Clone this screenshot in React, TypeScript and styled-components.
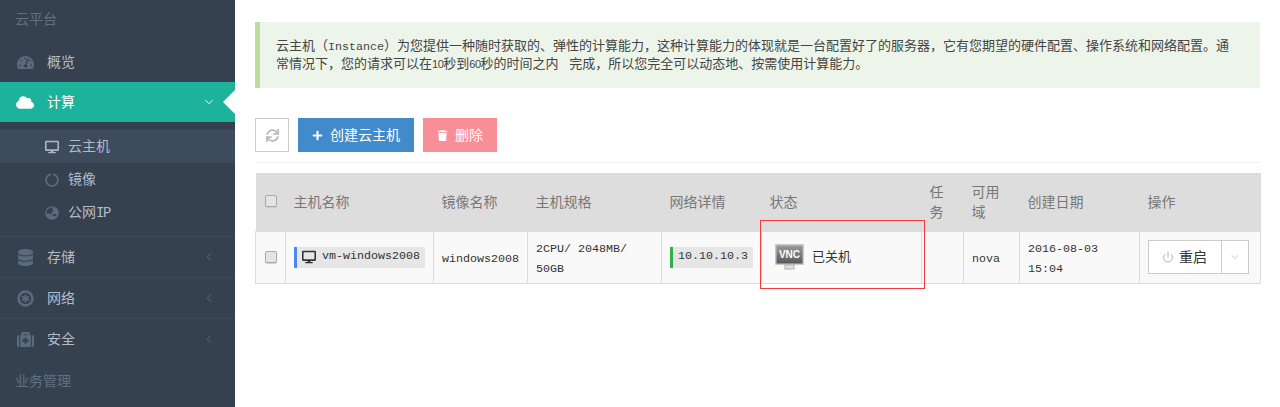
import React from "react";
import styled, { createGlobalStyle } from "styled-components";
import { ChevronDown, ChevronLeft, Power } from "lucide-react";
import {
  FaCircleNotch,
  FaCloud,
  FaDatabase,
  FaDesktop,
  FaGlobeAsia,
  FaMedkit,
  FaPlus,
  FaSync,
  FaTachometerAlt,
  FaTrash,
} from "react-icons/fa";

const GlobalStyle = createGlobalStyle`
  html, body {
    margin: 0;
    height: 407px;
    overflow: hidden;
    background: #fff;
    font-family: "Noto Sans CJK SC", "Liberation Sans", sans-serif;
    font-size: 14px;
    color: #333;
  }
`;

const Page = styled.div`
  display: flex;
  height: 407px;
`;

const Sidebar = styled.aside`
  width: 235px;
  flex-shrink: 0;
  background: #364150;
  overflow: hidden;
`;

const Heading = styled.div<{ $height: number; $lift: number }>`
  display: flex;
  align-items: center;
  box-sizing: border-box;
  height: ${({ $height }) => $height}px;
  padding: 0 0 ${({ $lift }) => $lift}px 15px;
  color: #617082;
  font-size: 14px;
`;

const NavItem = styled.div<{ $active?: boolean; $divider?: boolean }>`
  position: relative;
  display: flex;
  align-items: center;
  height: 40px;
  padding: 0 19px 0 16px;
  background: ${({ $active }) => ($active ? "#1cb29b" : "transparent")};
  color: ${({ $active }) => ($active ? "#fff" : "#b4bcc8")};
  border-top: ${({ $divider }) => ($divider ? "1px solid #3d4957" : "none")};

  ${({ $active }) =>
    $active &&
    `&::after {
      content: "";
      position: absolute;
      right: 0;
      top: 8px;
      border: 12px solid transparent;
      border-left-width: 0;
      border-right-color: #fff;
    }`}
`;

const NavIcon = styled.span<{ $active?: boolean; $size?: number }>`
  display: flex;
  justify-content: center;
  width: 18px;
  margin-right: 13px;
  font-size: ${({ $size }) => $size ?? 17}px;
  color: ${({ $active }) => ($active ? "#fff" : "#5b6a7d")};
`;

const NavLabel = styled.span`
  flex: 1;
  padding-bottom: 2px;
`;

const NavArrow = styled.span<{ $active?: boolean }>`
  display: flex;
  color: ${({ $active }) => ($active ? "#fff" : "#5b6a7d")};
`;

const SubMenu = styled.div`
  padding: 8px 0 7px;
`;

const SubItem = styled.div<{ $active?: boolean }>`
  display: flex;
  align-items: center;
  height: 33px;
  padding-left: 44px;
  background: ${({ $active }) => ($active ? "#3e4b5c" : "transparent")};
  color: #b4bcc8;
`;

const SubIcon = styled.span<{ $active?: boolean }>`
  display: flex;
  justify-content: center;
  width: 15px;
  margin-right: 9px;
  font-size: 14px;
  color: ${({ $active }) => ($active ? "#aeb6c2" : "#5b6a7d")};
`;

const SubLabel = styled.span`
  padding-bottom: 3px;
`;

const Main = styled.main`
  position: relative;
  flex: 1;
  padding: 22px 20px 0;
  min-width: 0;
`;

const Alert = styled.div`
  height: 66px;
  box-sizing: border-box;
  padding: 14px 20px 0 16px;
  background: #edf5ea;
  border-left: 5px solid #bcdca2;
  color: #444;
  font-size: 13px;
  line-height: 18px;
`;

const Latin = styled.span`
  font-family: "Liberation Mono", monospace;
  font-size: 11.67px;
  line-height: 1;
`;

const IpText = styled.span`
  font-family: "Liberation Mono", monospace;
  font-size: 14px;
  letter-spacing: -1.4px;
  line-height: 1;
`;

const Digits = styled.span`
  font-family: "Liberation Sans", sans-serif;
  font-size: 11px;
  letter-spacing: -0.5px;
  line-height: 1;
`;

const WideSpace = styled.span`
  font-family: "Liberation Mono", monospace;
  font-size: 18px;
  line-height: 1;
`;

const Toolbar = styled.div`
  display: flex;
  gap: 9px;
  margin-top: 30px;
  padding-bottom: 10px;
  border-bottom: 1px solid #eee;
`;

const ToolButton = styled.div<{ $bg: string }>`
  display: flex;
  align-items: center;
  gap: 7px;
  height: 34px;
  padding: 0 14px;
  background: ${({ $bg }) => $bg};
  color: #fff;
  font-size: 14px;
`;

const ToolLabel = styled.span`
  padding-bottom: 2px;
`;

const RefreshButton = styled.div`
  display: flex;
  align-items: center;
  justify-content: center;
  box-sizing: border-box;
  width: 34px;
  height: 34px;
  border: 1px solid #ccc;
  color: #bbb;
  font-size: 13px;
`;

const Table = styled.table`
  width: 1005px;
  margin-top: 10px;
  table-layout: fixed;
  border-collapse: collapse;
`;

const HeadRow = styled.tr`
  height: 58px;
  background: #ddd;
`;

const HeadCell = styled.th`
  padding: 0 8px 2px;
  text-align: left;
  font-weight: normal;
  font-size: 14px;
  line-height: 20px;
  color: #777;
`;

const BodyRow = styled.tr`
  height: 52px;
  background: #f9f9f9;
`;

const BodyCell = styled.td`
  padding: 0 8px;
  border: 1px solid #ddd;
  font-size: 13px;
  line-height: 20px;
  color: #333;
`;

const Check = styled.span`
  display: block;
  box-sizing: border-box;
  width: 12px;
  height: 12px;
  margin: 0 0 0 1px;
  border: 1px solid #aaa;
  border-radius: 2px;
  background: #e4e4e4;
  box-shadow: 0 1px 1px #ccc;
`;

const Chip = styled.div<{ $color: string }>`
  display: flex;
  align-items: center;
  height: 21px;
  padding-left: 5px;
  background: #e6e6e6;
  border-left: 3px solid ${({ $color }) => $color};
  white-space: nowrap;
`;

const ChipIcon = styled.span`
  display: flex;
  margin-right: 6px;
  font-size: 14px;
  color: #333;
`;

const StatusWrap = styled.div`
  display: flex;
  align-items: center;
  gap: 8px;
  padding-left: 5px;
`;

const StatusLabel = styled.span`
  padding-bottom: 3px;
`;

const SplitButton = styled.div`
  display: flex;
  height: 34px;
  box-sizing: border-box;
  width: 101px;
  background: #fff;
  border: 1px solid #ccc;
`;

const RestartPart = styled.div`
  display: flex;
  align-items: center;
  gap: 5px;
  width: 73px;
  box-sizing: border-box;
  padding-left: 13px;
  border-right: 1px solid #ccc;
  font-size: 14px;
  color: #333;
`;

const PowerIcon = styled.span`
  display: flex;
  color: #aaa;
`;

const RestartLabel = styled.span`
  padding-bottom: 2px;
`;

const CaretPart = styled.div`
  display: flex;
  flex: 1;
  align-items: center;
  justify-content: center;
  color: #aaa;
`;

const Highlight = styled.div`
  position: absolute;
  left: 525px;
  top: 220px;
  width: 163px;
  height: 67px;
  border: 1px solid #f23c3c;
  pointer-events: none;
`;

const NetworkIcon = () => (
  <svg width="17" height="17" viewBox="0 0 17 17" fill="none" stroke="currentColor">
    <circle cx="8.5" cy="8.5" r="7" strokeWidth="2.4" />
    <path d="M8.5 4.5v8M5 6.5l7 4M12 6.5l-7 4" strokeWidth="1.8" />
  </svg>
);

const VncIcon = () => (
  <svg width="29" height="26" viewBox="0 0 29 26">
    <defs>
      <linearGradient id="vncScreen" x1="0" y1="0" x2="0" y2="1">
        <stop offset="0" stopColor="#9a9a9a" />
        <stop offset="1" stopColor="#585858" />
      </linearGradient>
    </defs>
    <rect x="0" y="0" width="29" height="21" rx="1" fill="#c8c8c8" />
    <rect x="1.5" y="1.5" width="26" height="18" fill="url(#vncScreen)" />
    <rect x="10" y="21" width="9" height="4" fill="#e2e2e2" stroke="#b0b0b0" />
    <text x="14.5" y="14" textAnchor="middle" fill="#fff" fontSize="10" fontWeight="bold" fontFamily="Liberation Sans, sans-serif">
      VNC
    </text>
  </svg>
);

const App = () => {
  return (
    <>
      <GlobalStyle />
      <Page>
        <Sidebar>
          <Heading $height={42} $lift={6}>云平台</Heading>
          <NavItem>
            <NavIcon><FaTachometerAlt /></NavIcon>
            <NavLabel>概览</NavLabel>
          </NavItem>
          <NavItem $active>
            <NavIcon $active $size={21}><FaCloud /></NavIcon>
            <NavLabel>计算</NavLabel>
            <NavArrow $active><ChevronDown size={14} strokeWidth={1.6} /></NavArrow>
          </NavItem>
          <SubMenu>
            <SubItem $active>
              <SubIcon $active><FaDesktop /></SubIcon>
              <SubLabel>云主机</SubLabel>
            </SubItem>
            <SubItem>
              <SubIcon><FaCircleNotch /></SubIcon>
              <SubLabel>镜像</SubLabel>
            </SubItem>
            <SubItem>
              <SubIcon><FaGlobeAsia /></SubIcon>
              <SubLabel>公网<IpText>IP</IpText></SubLabel>
            </SubItem>
          </SubMenu>
          <NavItem $divider>
            <NavIcon><FaDatabase /></NavIcon>
            <NavLabel>存储</NavLabel>
            <NavArrow><ChevronLeft size={14} strokeWidth={1.6} /></NavArrow>
          </NavItem>
          <NavItem $divider>
            <NavIcon><NetworkIcon /></NavIcon>
            <NavLabel>网络</NavLabel>
            <NavArrow><ChevronLeft size={14} strokeWidth={1.6} /></NavArrow>
          </NavItem>
          <NavItem $divider>
            <NavIcon><FaMedkit /></NavIcon>
            <NavLabel>安全</NavLabel>
            <NavArrow><ChevronLeft size={14} strokeWidth={1.6} /></NavArrow>
          </NavItem>
          <Heading $height={44} $lift={2}>业务管理</Heading>
        </Sidebar>
        <Main>
          <Alert>
            云主机（<Latin>Instance</Latin>）为您提供一种随时获取的、弹性的计算能力，这种计算能力的体现就是一台配置好了的服务器，它有您期望的硬件配置、操作系统和网络配置。通常情况下，您的请求可以在<Digits>10</Digits>秒到<Digits>60</Digits>秒的时间之内<WideSpace>{" "}</WideSpace>完成，所以您完全可以动态地、按需使用计算能力。
          </Alert>
          <Toolbar>
            <RefreshButton><FaSync /></RefreshButton>
            <ToolButton $bg="#428bca"><FaPlus size={11} /><ToolLabel>创建云主机</ToolLabel></ToolButton>
            <ToolButton $bg="#f98f96"><FaTrash size={11} /><ToolLabel>删除</ToolLabel></ToolButton>
          </Toolbar>
          <Table>
            <colgroup>
              {[30, 148, 94, 134, 100, 160, 42, 56, 120, 121].map((w, i) => (
                <col key={i} width={w} />
              ))}
            </colgroup>
            <thead>
              <HeadRow>
                <HeadCell><Check /></HeadCell>
                <HeadCell>主机名称</HeadCell>
                <HeadCell>镜像名称</HeadCell>
                <HeadCell>主机规格</HeadCell>
                <HeadCell>网络详情</HeadCell>
                <HeadCell>状态</HeadCell>
                <HeadCell>任务</HeadCell>
                <HeadCell>可用域</HeadCell>
                <HeadCell>创建日期</HeadCell>
                <HeadCell>操作</HeadCell>
              </HeadRow>
            </thead>
            <tbody>
              <BodyRow>
                <BodyCell><Check /></BodyCell>
                <BodyCell>
                  <Chip $color="#4a87ee">
                    <ChipIcon><FaDesktop /></ChipIcon>
                    <Latin>vm-windows2008</Latin>
                  </Chip>
                </BodyCell>
                <BodyCell><Latin>windows2008</Latin></BodyCell>
                <BodyCell><Latin>2CPU/ 2048MB/ 50GB</Latin></BodyCell>
                <BodyCell>
                  <Chip $color="#2eaf4a"><Latin>10.10.10.3</Latin></Chip>
                </BodyCell>
                <BodyCell>
                  <StatusWrap><VncIcon /><StatusLabel>已关机</StatusLabel></StatusWrap>
                </BodyCell>
                <BodyCell />
                <BodyCell><Latin>nova</Latin></BodyCell>
                <BodyCell><Latin>2016-08-03 15:04</Latin></BodyCell>
                <BodyCell>
                  <SplitButton>
                    <RestartPart>
                      <PowerIcon><Power size={12} strokeWidth={1.8} /></PowerIcon>
                      <RestartLabel>重启</RestartLabel>
                    </RestartPart>
                    <CaretPart><ChevronDown size={12} strokeWidth={1.4} /></CaretPart>
                  </SplitButton>
                </BodyCell>
              </BodyRow>
            </tbody>
          </Table>
          <Highlight />
        </Main>
      </Page>
    </>
  );
};

export default App;
